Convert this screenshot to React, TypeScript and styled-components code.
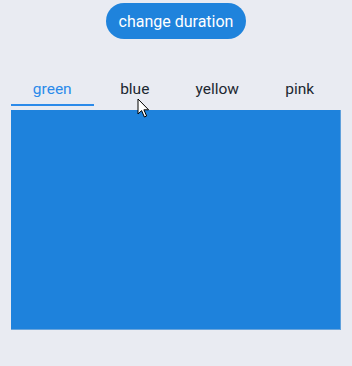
import React, { useState } from "react";
import styled, { createGlobalStyle } from "styled-components";

const Global = createGlobalStyle`
  html, body { margin: 0; padding: 0; background: #e9ebf2; }
  body { font-family: Roboto, "Noto Sans", "Liberation Sans", sans-serif; }
`;

const Page = styled.div`
  position: relative;
  width: 352px;
  height: 366px;
  background: #e9ebf2;
  display: flex;
  flex-direction: column;
  align-items: center;
  overflow: hidden;
`;

const PillButton = styled.button`
  margin-top: 3px;
  width: 140px;
  height: 36px;
  border: none;
  border-radius: 18px;
  background: #1f83dc;
  color: #ffffff;
  font-family: inherit;
  font-size: 16px;
  padding: 0;
  cursor: pointer;
`;

const Tabs = styled.div`
  margin-top: 33px;
  width: 330px;
  display: grid;
  grid-template-columns: repeat(4, 1fr);
`;

const Tab = styled.div<{ $active: boolean }>`
  height: 34px;
  display: flex;
  align-items: center;
  justify-content: center;
  font-size: 15.5px;
  color: ${(p) => (p.$active ? "#2b8aea" : "#1c2731")};
  box-sizing: border-box;
  border-bottom: 2px solid ${(p) => (p.$active ? "#2b8aea" : "transparent")};
  padding-top: 2px;
`;

const Panel = styled.div`
  margin-top: 4px;
  width: 330px;
  height: 220px;
  box-sizing: border-box;
  background: #1e82dc;
  border-right: 1px solid #5fa0dc;
  border-bottom: 1px solid #6aa5dc;
`;

const Cursor = styled.svg`
  position: absolute;
  left: 137px;
  top: 98px;
  width: 14px;
  height: 21px;
`;

const tabs = ["green", "blue", "yellow", "pink"];

export default function App() {
  const [active, setActive] = useState(0);
  return (
    <>
      <Global />
      <Page>
        <PillButton>change duration</PillButton>
        <Tabs>
          {tabs.map((t, i) => (
            <Tab key={t} $active={i === active} onClick={() => setActive(i)}>
              {t}
            </Tab>
          ))}
        </Tabs>
        <Panel />
        <Cursor viewBox="0 0 14 21">
          <path
            d="M1 1 L1 16 L4.6 12.6 L7.4 19 L9.6 18 L6.9 11.8 L11.6 11.8 Z"
            fill="#ffffff"
            stroke="#000000"
            strokeWidth="1"
            strokeLinejoin="round"
          />
        </Cursor>
      </Page>
    </>
  );
}
